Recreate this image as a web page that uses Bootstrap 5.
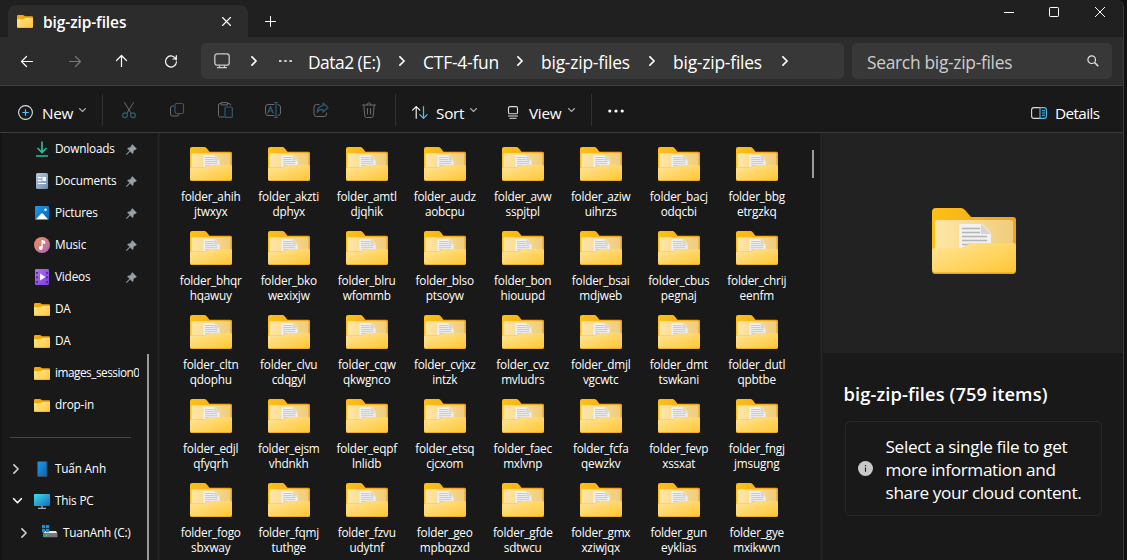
<!DOCTYPE html>
<html lang="en" data-bs-theme="dark">
<head>
<meta charset="utf-8">
<title>big-zip-files</title>
<link href="https://cdn.jsdelivr.net/npm/bootstrap@5.3.0/dist/css/bootstrap.min.css" rel="stylesheet">
<style>
  body { font-family: "Open Sans", "Noto Sans", sans-serif; background: #111; color: #fff; width: 1127px; height: 560px; overflow: hidden; }
  svg { display: block; flex: none; overflow: visible; }
  .ln { fill: none; stroke: currentColor; stroke-linecap: round; stroke-linejoin: round; }
  .explorer { width: 1124px; height: 560px; background: #191919; border-right: 1px solid #3b3b3b; border-top-right-radius: 7px; overflow: hidden; }
  .tabstrip { height: 37px; background: #202020; padding-left: 8px; }
  .tabitem { width: 240px; height: 32px; margin-top: 5px; padding: 0 17px 0 9px; background: #2c2c2c; border-radius: 8px 8px 0 0; }
  .tabname { font-size: 15.5px; font-weight: 600; letter-spacing: -.1px; margin-left: 10px; line-height: 20px; padding-top: 1px; }
  .newtab { margin: 16px 0 0 17px; }
  .winctl { height: 24px; padding-right: 18px; }
  .navrow { height: 49px; background: #2c2c2c; border-bottom: 1px solid #3c3c3c; padding: 6px 11px 6px 0; }
  .navbtn { width: 48px; height: 36px; }
  .fieldbox { height: 36px; background: #383838; border-radius: 5px; }
  .address { width: 643px; margin-left: 6px; }
  .crumb { font-size: 17.4px; letter-spacing: -.2px; line-height: 24px; white-space: nowrap; padding-top: 2px; }
  .crumb-caps { letter-spacing: -.5px; }
  .searchbox { width: 260px; margin-left: 8px; padding: 0 13px 0 15px; color: #cdcdcd; }
  .tools { height: 47px; border-bottom: 1px solid #3c3c3c; background: #191919; }
  .tool-t { font-size: 15.3px; letter-spacing: -.25px; line-height: 20px; white-space: nowrap; }
  .tool-main { padding-top: 7px; }
  .tool-main .mb-chev { margin-bottom: 6px; color: #aaa; }
  .toolbtn { width: 48px; height: 46px; padding-top: 16px; color: #6b6b6b; }
  .vsep { width: 1px; height: 32px; background: #303030; align-self: flex-start; margin-top: 8px; }
  .side { width: 157px; border-left: 2px solid #131313; }
  .side-list { width: 137px; }
  .side-row { height: 32px; font-size: 11.8px; letter-spacing: -.2px; white-space: nowrap; }
  .side-ico { width: 16px; margin-right: 5px; }
  .side-tw { width: 32px; padding-left: 11px; }
  .side-tx { width: 71px; }
  .side-tx.long-name { letter-spacing: -.48px; }
  .side-div { height: 1px; background: #454545; margin: 16px 8px 15px; }
  .side-bar { width: 2px; height: 206px; margin: 221px 0 0 8px; background: #9a9a9a; }
  .splitter { width: 3px; background: #272727; border-left: 1px solid #1d1d1d; border-right: 1px solid #1d1d1d; }
  .files { width: 661px; padding: 14px 0 0 12px; }
  .file-grid { display: grid; grid-template-columns: repeat(8, 78px); grid-auto-rows: 84px; height: 413px; overflow: hidden; }
  .file-cell { font-size: 11.8px; letter-spacing: -.22px; line-height: 15px; text-align: center; }
  .file-cell svg { margin: 0 auto 8px; }
  .file-cell span { display: block; }
  .file-bar { width: 2px; height: 28px; background: #9a9a9a; margin: 4px 0 0 16px; }
  .details { width: 301px; }
  .preview { height: 220px; background: #222; padding-top: 75px; padding-left: 109px; }
  .details-title { font-size: 18.3px; font-weight: 600; letter-spacing: .1px; line-height: 24px; margin: 29px 0 0 21px; white-space: nowrap; }
  .tipbox { margin: 15px 0 0 22px; width: 257px; height: 95px; border: 1px solid #282828; border-radius: 5px; padding-left: 12px; }
  .tip-t { font-size: 17.2px; letter-spacing: -.36px; line-height: 23px; margin-left: 13px; white-space: nowrap; padding-top: 1px; }
</style>
</head>
<body>
<svg width="0" height="0" class="position-absolute">
  <defs>
    <linearGradient id="gFront" x1="0" y1="0" x2="1" y2="1"><stop offset="0" stop-color="#ffe69a"/><stop offset="1" stop-color="#ffc633"/></linearGradient>
    <linearGradient id="gIn" x1="0" y1="0" x2="1" y2="0"><stop offset="0" stop-color="#ffe6a6"/><stop offset="1" stop-color="#f0cc7c"/></linearGradient>
    <linearGradient id="gBack" x1="0" y1="0" x2="1" y2="0"><stop offset="0" stop-color="#ffc017"/><stop offset="1" stop-color="#e9a520"/></linearGradient>
    <linearGradient id="gDoc" x1="0" y1="0" x2="1" y2="1"><stop offset="0" stop-color="#b8cbe0"/><stop offset="1" stop-color="#6e8bab"/></linearGradient>
    <linearGradient id="gPic" x1="0" y1="0" x2="1" y2="1"><stop offset="0" stop-color="#1f9be8"/><stop offset="1" stop-color="#0a62b8"/></linearGradient>
    <linearGradient id="gMus" x1="0" y1="0" x2="1" y2="1"><stop offset="0" stop-color="#f79257"/><stop offset="1" stop-color="#a467b8"/></linearGradient>
    <linearGradient id="gVid" x1="0" y1="0" x2="1" y2="1"><stop offset="0" stop-color="#b373ee"/><stop offset="1" stop-color="#7b3be0"/></linearGradient>
    <linearGradient id="gPC" x1="0" y1="0" x2="1" y2="1"><stop offset="0" stop-color="#3fe0e4"/><stop offset="1" stop-color="#1567c4"/></linearGradient>
    <symbol id="folder" viewBox="0 0 84 66">
      <path d="M0 4Q0 0 4 0H29Q31 0 33 2L39 9H81Q84 9 84 12V62Q84 66 80 66H4Q0 66 0 62Z" fill="url(#gBack)"/>
      <path d="M3 14Q3 12 5 12H79Q81 12 81 14V45H3Z" fill="url(#gIn)"/>
      <path d="M27 16H50L59 25V46H27Z" fill="#f1f1f1"/>
      <path d="M49 16L59 26H49Z" fill="#d4d4d4"/>
      <path d="M30 20.500H48M30 24.500H48M30 28.500H55M30 32.500H55M30 36.500H55" stroke="#b4b4b4" stroke-width="1.400"/>
      <path d="M0 43Q0 40 3 40H29Q31 40 33 38.500L36 36Q37 35 39 35H81Q84 35 84 38V62Q84 66 80 66H4Q0 66 0 62Z" fill="#e2a428"/>
      <path d="M0 43Q0 40 3 40H29Q31 40 33 38.500L36 36Q37 35 39 35H81Q84 35 84 38V60.500Q84 64.500 80 64.500H4Q0 64.500 0 60.500Z" fill="url(#gFront)"/>
    </symbol>
    <symbol id="folder-s" viewBox="0 0 16 13">
      <path d="M0 1.200Q0 0 1.200 0H6Q6.500 0 7 .5L8 1.300H15Q16 1.300 16 2.300V11.800Q16 13 15 13H1Q0 13 0 11.800Z" fill="#f5a80c"/>
      <path d="M0 4.300H6Q6.800 4.200 7.300 3.700L8.100 3H15Q16 3 16 4V11.500Q16 12.400 15 12.400H1Q0 12.400 0 11.500Z" fill="url(#gFront)"/>
    </symbol>
    <symbol id="pin" viewBox="0 0 11 11"><path d="M6.300 .4L10.600 4.700L9.700 5.600L9.100 5.400L7.300 7.200Q7.500 8.800 6.600 9.700L4.200 7.300L1 10.600L.3 10.700L.4 10L3.700 6.800L1.300 4.400Q2.200 3.500 3.800 3.700L5.600 1.900L5.400 1.300Z" fill="#95a0a8" stroke="#95a0a8" stroke-width=".4"/></symbol>
    <symbol id="chev-r" viewBox="0 0 7 12"><path class="ln" stroke-width="2" d="M1 1L6 6L1 11"/></symbol>
    <symbol id="chev-d" viewBox="0 0 7 4"><path class="ln" stroke-width="1.100" d="M.5 .5L3.500 3.500L6.500 .5"/></symbol>
  </defs>
</svg>

<div class="explorer d-flex flex-column">
  <div class="tabstrip d-flex">
    <div class="tabitem d-flex align-items-center">
      <svg width="16" height="13"><use href="#folder-s"/></svg>
      <span class="tabname">big-zip-files</span>
      <svg class="ms-auto" width="9" height="9" viewBox="0 0 9 9"><path class="ln" stroke-width="1.100" d="M.5 .5L8.500 8.500M8.500 .5L.5 8.500"/></svg>
    </div>
    <svg class="newtab" width="11" height="11" viewBox="0 0 11 11"><path class="ln" d="M5.500 .5V10.500M.5 5.500H10.500"/></svg>
    <div class="winctl d-flex align-items-center ms-auto">
      <svg width="10" height="10" viewBox="0 0 10 10"><path d="M0 5.500H10" stroke="#fff"/></svg>
      <svg style="margin-left:35px" width="10" height="10" viewBox="0 0 10 10"><rect x=".5" y=".5" width="9" height="9" rx=".8" fill="none" stroke="#fff"/></svg>
      <svg style="margin-left:36px" width="10" height="10" viewBox="0 0 10 10"><path class="ln" d="M.3 .3L9.700 9.700M9.700 .3L.3 9.700"/></svg>
    </div>
  </div>

  <div class="navrow d-flex">
    <div class="d-flex" style="width:195px;padding-left:3px">
      <div class="navbtn d-flex align-items-center justify-content-center"><svg width="12" height="11" viewBox="0 0 12 11"><path class="ln" stroke-width="1.200" d="M11.500 5.500H.7M5.500 .5L.5 5.500L5.500 10.500"/></svg></div>
      <div class="navbtn d-flex align-items-center justify-content-center" style="color:#777"><svg width="12" height="11" viewBox="0 0 12 11"><path class="ln" stroke-width="1.200" d="M.5 5.500H11.300M6.500 .5L11.500 5.500L6.500 10.500"/></svg></div>
      <div class="navbtn d-flex align-items-center justify-content-center pe-1"><svg width="11" height="12" viewBox="0 0 11 12"><path class="ln" stroke-width="1.200" d="M5.500 11.500V.7M.5 5.500L5.500 .5L10.500 5.500"/></svg></div>
      <div class="navbtn d-flex align-items-center justify-content-center"><svg width="12" height="12" viewBox="0 0 12 12"><path class="ln" stroke-width="1.200" d="M11.300 5A5.500 5.500 0 1 0 11.500 6.800M11.300 .7V4H8"/></svg></div>
    </div>
    <div class="fieldbox address d-flex align-items-center">
      <svg style="margin-left:13px" width="16" height="16" viewBox="0 0 16 16"><rect x=".8" y=".8" width="14.400" height="11.400" rx="2.500" fill="none" stroke="#ccc" stroke-width="1.300"/><path d="M5.500 12.500V14.500M10.500 12.500V14.500M3 14.700H13" stroke="#ccc" stroke-width="1.300"/></svg>
      <svg style="margin-left:21px" width="6" height="10"><use href="#chev-r"/></svg>
      <svg style="margin-left:22px" width="13" height="3" viewBox="0 0 13 3"><path d="M0 1H2.500M5.200 1H7.700M10.400 1H12.900" stroke="#fff" stroke-width="1.700"/></svg>
      <span class="crumb crumb-caps" style="margin-left:16px;width:91px">Data2 (E:)</span>
      <svg width="6" height="10"><use href="#chev-r"/></svg>
      <span class="crumb" style="margin-left:18px;width:94px">CTF-4-fun</span>
      <svg width="6" height="10"><use href="#chev-r"/></svg>
      <span class="crumb" style="margin-left:18px;width:108px">big-zip-files</span>
      <svg width="6" height="10"><use href="#chev-r"/></svg>
      <span class="crumb" style="margin-left:18px;width:109px">big-zip-files</span>
      <svg width="6" height="10"><use href="#chev-r"/></svg>
    </div>
    <div class="fieldbox searchbox d-flex align-items-center justify-content-between">
      <span class="crumb" style="letter-spacing:-.3px">Search big-zip-files</span>
      <svg width="12" height="12" viewBox="0 0 12 12"><circle cx="4.700" cy="4.700" r="3.800" fill="none" stroke="#e4e4e4" stroke-width="1.200"/><path d="M7.500 7.500L11.300 11.200" stroke="#e4e4e4" stroke-width="1.500"/></svg>
    </div>
  </div>

  <div class="tools d-flex">
    <div class="tool-main d-flex align-items-center" style="width:102px;padding-left:18px">
      <svg width="15" height="15" viewBox="0 0 15 15"><circle cx="7.500" cy="7.500" r="6.900" fill="none" stroke="#ddd" stroke-width="1.100"/><path d="M7.500 4.300V10.700M4.300 7.500H10.700" stroke="#4cc2ff" stroke-width="1.200"/></svg>
      <span class="tool-t" style="margin-left:9px;width:37px">New</span>
      <svg class="mb-chev" width="7" height="4"><use href="#chev-d"/></svg>
    </div>
    <div class="vsep"></div>
    <div class="d-flex" style="padding-left:2px;width:292px">
      <div class="toolbtn d-flex justify-content-center"><svg width="14" height="17" viewBox="0 0 14 17"><path class="ln" d="M2.500 .5L9.300 11.500M11.500 .5L4.700 11.500"/><circle cx="3" cy="13.200" r="2.400" fill="none" stroke="#2b5c76" stroke-width="1.200"/><circle cx="11" cy="13.200" r="2.400" fill="none" stroke="#2b5c76" stroke-width="1.200"/></svg></div>
      <div class="toolbtn d-flex justify-content-center"><svg width="14" height="16" viewBox="0 0 14 16"><path class="ln" d="M3.500 4H2.500Q.5 4 .5 6V12Q.5 14 2.500 14H7Q9 14 9 12.500"/><rect x="5" y="1.500" width="8.500" height="10" rx="1.800" fill="none" stroke="#2b5c76" stroke-width="1.200"/></svg></div>
      <div class="toolbtn d-flex justify-content-center"><svg width="15" height="17" viewBox="0 0 15 17"><path class="ln" d="M6 15H2.500Q.5 15 .5 13.500V3Q.5 1.500 2 1.500H3M10 1.500H11Q12.500 1.500 12.500 3M3.500 .6H9.500V2.900H3.500Z"/><rect x="7" y="5" width="7.300" height="10.400" rx="1" fill="none" stroke="#2b5c76" stroke-width="1.200"/></svg></div>
      <div class="toolbtn d-flex justify-content-center"><svg width="16" height="16" viewBox="0 0 16 16"><path class="ln" d="M9 2.500H3Q.5 2.500 .5 5V11Q.5 13.500 3 13.500H9M13 2.500Q15.500 2.700 15.500 5V11Q15.500 13.300 13 13.500"/><path class="ln" style="stroke:#2b5c76" stroke-width="1.200" d="M2.800 11L5.500 4.500L8.200 11M3.700 9H7.300M11 .5V15.500M9.500 .5H12.500M9.500 15.500H12.500"/></svg></div>
      <div class="toolbtn d-flex justify-content-center"><svg width="16" height="16" viewBox="0 0 16 16"><path class="ln" d="M6 2.500H3.500Q1 2.500 1 5V12Q1 14.500 3.500 14.500H11Q13.500 14.500 13.500 12V11"/><path class="ln" style="stroke:#2b5c76" stroke-width="1.200" d="M10 1L15 5.500L10 10V7.500Q6 7.200 4 10.500Q4.500 4.500 10 3.700Z"/></svg></div>
      <div class="toolbtn d-flex justify-content-center"><svg width="14" height="17" viewBox="0 0 14 17"><path class="ln" d="M.5 3H13.500M5 3Q5 .8 7 .8Q9 .8 9 3M1.800 3L2.800 14Q3 15.500 4.500 15.500H9.500Q11 15.500 11.200 14L12.200 3M5.500 6.500V12M8.500 6.500V12"/></svg></div>
    </div>
    <div class="vsep"></div>
    <div class="tool-main d-flex align-items-center" style="width:195px;padding-left:16px">
      <svg width="16" height="13" viewBox="0 0 16 13"><path class="ln" stroke-width="1.100" d="M4.200 12.300V.6M.6 4.200L4.200 .6L7.800 4.200"/><path class="ln" style="stroke:#4cc2ff" stroke-width="1.200" d="M11.500 .6V12.300M7.900 8.700L11.500 12.300L15.100 8.700"/></svg>
      <span class="tool-t" style="margin-left:8px;width:34px">Sort</span>
      <svg class="mb-chev" width="7" height="4"><use href="#chev-d"/></svg>
      <svg style="margin-left:30px" width="12" height="13" viewBox="0 0 12 13"><rect x="1.500" y=".6" width="9" height="7.200" rx="1.400" fill="none" stroke="#ddd" stroke-width="1.100"/><path d="M1 10H11M2.500 12.300H9.500" stroke="#ddd"/></svg>
      <span class="tool-t" style="margin-left:10px;width:39px">View</span>
      <svg class="mb-chev" width="7" height="4"><use href="#chev-d"/></svg>
    </div>
    <div class="vsep"></div>
    <svg style="margin:23px 0 0 16px" width="16" height="4" viewBox="0 0 16 4"><circle cx="1.800" cy="2" r="1.600" fill="#fff"/><circle cx="8" cy="2" r="1.600" fill="#fff"/><circle cx="14.200" cy="2" r="1.600" fill="#fff"/></svg>
    <div class="tool-main d-flex align-items-center ms-auto" style="width:92px">
      <svg width="16" height="12" viewBox="0 0 16 12"><path d="M9 .6H3Q.6 .6 .6 3V9Q.6 11.400 3 11.400H9" fill="none" stroke="#ddd" stroke-width="1.100"/><path d="M9 .6H13Q15.400 .6 15.400 3V9Q15.400 11.400 13 11.400H9ZM11 3.800H14M11 6H14M11 8.200H14" fill="none" stroke="#4cc2ff" stroke-width="1.100"/></svg>
      <span class="tool-t" style="margin-left:8px;letter-spacing:-.6px">Details</span>
    </div>
  </div>

  <div class="d-flex flex-grow-1 overflow-hidden">
    <div class="side d-flex">
      <div class="side-list overflow-hidden" id="side"></div>
      <div class="side-bar"></div>
    </div>
    <div class="splitter"></div>
    <div class="files d-flex">
      <div class="file-grid" id="files"></div>
      <div class="file-bar" style="margin-top:3px"></div>
    </div>
    <div class="splitter"></div>
    <div class="details">
      <div class="preview"><svg width="84" height="66"><use href="#folder"/></svg></div>
      <div class="details-title">big-zip-files (759 items)</div>
      <div class="tipbox d-flex align-items-center">
        <svg width="15" height="15" viewBox="0 0 15 15"><circle cx="7.500" cy="7.500" r="7.500" fill="#c9c9c9"/><path d="M7.500 6.500V10.800M7.500 4V5.300" stroke="#191919" stroke-width="1.100"/></svg>
        <div class="tip-t">Select a single file to get<br>more information and<br>share your cloud content.</div>
      </div>
    </div>
  </div>
</div>

<script src="https://cdn.jsdelivr.net/npm/bootstrap@5.3.0/dist/js/bootstrap.bundle.min.js"></script>
<script>
  const small = '<svg width="16" height="13"><use href="#folder-s"/></svg>';
  const chevR = '<svg class="ms-1" width="6" height="10" color="#ccc"><use href="#chev-r"/></svg>';
  const chevD = '<svg width="9" height="6" viewBox="0 0 9 6"><path class="ln" stroke-width="1.600" d="M.7 .7L4.500 4.700L8.300 .7"/></svg>';
  const icons = {
    down: '<svg width="16" height="16" viewBox="0 0 16 16"><path d="M8 .5V11.500M3.500 7L8 11.500L12.500 7M2 15H14" fill="none" stroke="#27bd9a" stroke-width="1.700"/></svg>',
    doc: '<svg width="16" height="16" viewBox="0 0 16 16"><rect x="2" y="0" width="12" height="16" rx="1.500" fill="url(#gDoc)"/><path d="M4 4.700H7.500M4 7.500H7.500M4 10.500H12" stroke="#fff" stroke-width="1.200"/><rect x="8.500" y="4" width="3.500" height="4" fill="#fff"/></svg>',
    pic: '<svg width="16" height="16" viewBox="0 0 16 16"><rect x="1" y="1" width="14" height="14" rx="1.300" fill="url(#gPic)"/><path d="M2 14.200L7.300 8.500Q8 7.900 8.700 8.500L14 14.200Z" fill="#fff"/><circle cx="11.500" cy="4.700" r="1.300" fill="#fff"/></svg>',
    mus: '<svg width="16" height="16" viewBox="0 0 16 16"><circle cx="8" cy="8" r="8" fill="url(#gMus)"/><circle cx="6.700" cy="11" r="1.900" fill="#fff"/><path d="M8 11V3.300L10.800 4.500V6.500L8.600 5.600" fill="#fff" stroke="#fff"/></svg>',
    vid: '<svg width="16" height="16" viewBox="0 0 16 16"><rect x="1" y="0" width="14" height="16" rx="1.300" fill="url(#gVid)"/><path d="M6 4.500L11.500 8L6 11.500Z" fill="#fff"/><path d="M3 3V14M13 3V14" stroke="#4b208f" stroke-width="1.800" stroke-dasharray="1.800 2.700"/></svg>',
    phone: '<svg width="16" height="16" viewBox="0 0 16 16"><rect x="3.500" y=".5" width="9.500" height="15" rx=".8" fill="url(#gPic)" stroke="#45474a"/></svg>',
    pc: '<svg width="16" height="16" viewBox="0 0 16 16"><rect x="0" y="1" width="16" height="12" rx=".8" fill="url(#gPC)"/><path d="M8 13V15M4 15.300H12" stroke="#a8b0b6" stroke-width="1.300"/></svg>',
    disk: '<svg width="16" height="16" viewBox="0 0 16 16"><path d="M2.500 6H14L15.500 8.500H1Z" fill="#e9e9e9"/><rect x="1" y="8.500" width="14.500" height="3.800" rx=".6" fill="#777"/><circle cx="4.500" cy="10.400" r=".9" fill="#31e04a"/><path d="M0 0H3.200V3.200H0ZM4 0H7.200V3.200H4ZM0 4H3.200V7.200H0ZM4 4H7.200V7.200H4Z" fill="#1190e2"/></svg>'
  };
  const pin = '<svg width="11" height="11"><use href="#pin"/></svg>';
  const rows = [
    ['', icons.down, 'Downloads', pin], ['', icons.doc, 'Documents', pin], ['', icons.pic, 'Pictures', pin],
    ['', icons.mus, 'Music', pin], ['', icons.vid, 'Videos', pin], ['', small, 'DA'], ['', small, 'DA'],
    ['', small, 'images_session0'], ['', small, 'drop-in'], null,
    [chevR.replace('ms-1', 'ms-0'), icons.phone, 'Tuấn Anh'], [chevD, icons.pc, 'This PC'], [chevR.replace('ms-1', 'ms-0'), icons.disk, 'TuanAnh (C:)', '', 8]
  ];
  document.getElementById('side').innerHTML = rows.map(r => r === null
    ? '<div class="side-div"></div>'
    : `<div class="side-row d-flex align-items-center"${r[4] ? ` style="padding-left:${r[4]}px"` : ''}><div class="side-tw">${r[0]}</div><div class="side-ico">${r[1]}</div><span class="side-tx${r[2].length > 12 ? ' long-name' : ''}">${r[2]}</span>${r[3] || ''}</div>`).join('');

  const names = `ahih jtwxyx,akzti dphyx,amtl djqhik,audz aobcpu,avw sspjtpl,aziw uihrzs,bacj odqcbi,bbg etrgzkq,
bhqr hqawuy,bko wexixjw,blru wfommb,blso ptsoyw,bon hiouupd,bsai mdjweb,cbus pegnaj,chrij eenfm,
cltn qdophu,clvu cdqgyl,cqw qkwgnco,cvjxz intzk,cvz mvludrs,dmjl vgcwtc,dmt tswkani,dutl qpbtbe,
edjl qfyqrh,ejsm vhdnkh,eqpf lnlidb,etsq cjcxom,faec mxlvnp,fcfa qewzkv,fevp xssxat,fngj jmsugng,
fogo sbxway,fqmj tuthge,fzvu udytnf,geo mpbqzxd,gfde sdtwcu,gmx xziwjqx,gun eyklias,gye mxikwvn`;
  document.getElementById('files').innerHTML = names.split(',').map(n => {
    const [a, b] = n.trim().split(' ');
    return `<div class="file-cell"><svg width="42" height="34" viewBox="0 0 84 66" preserveAspectRatio="none"><use href="#folder" width="84" height="66"/></svg><span>folder_${a}</span><span>${b}</span></div>`;
  }).join('');
</script>
</body>
</html>
